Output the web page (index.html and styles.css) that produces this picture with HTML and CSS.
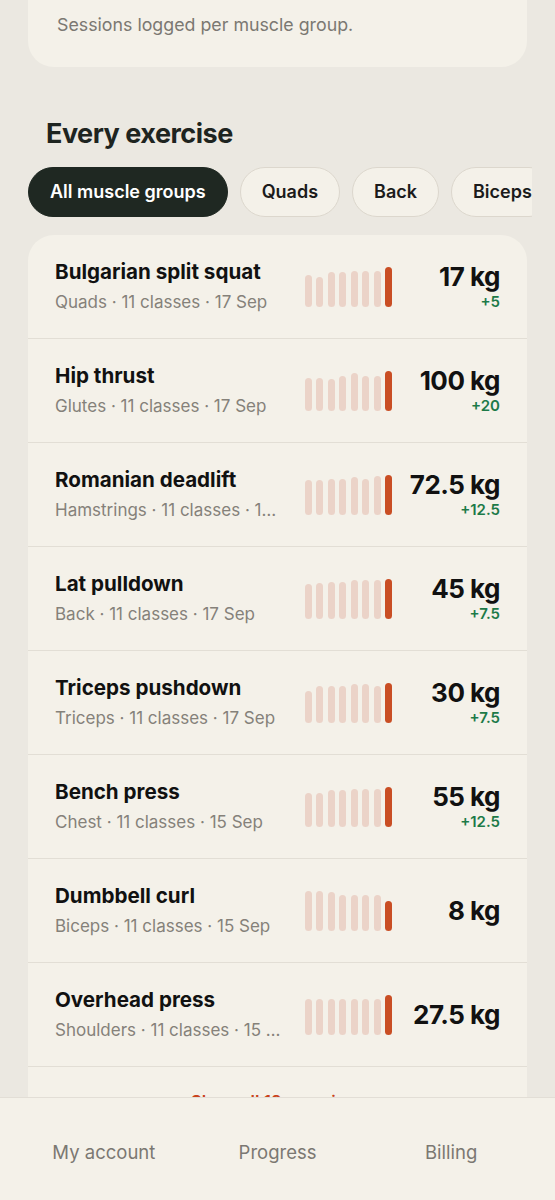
FILE: index.html
```html
<!DOCTYPE html>
<html>
<head>
    <meta charset="utf-8">
    <title>Progress</title>
    <link rel="stylesheet" href="styles.css">
</head>
<body>
<div class="page">
    <div class="summary">
        <p class="summary-note">Sessions logged per muscle group.</p>
    </div>

    <h2 class="section-title">Every exercise</h2>

    <div class="chips">
        <span class="chip on">All muscle groups</span>
        <span class="chip">Quads</span>
        <span class="chip">Back</span>
        <span class="chip">Biceps</span>
        <span class="chip">Chest</span>
    </div>

    <div class="list">
        <div class="row">
            <div class="info">
                <div class="name">Bulgarian split squat</div>
                <div class="meta">Quads · 11 classes · 17 Sep</div>
            </div>
            <div class="spark">
                <i style="height:80%"></i><i style="height:75%"></i><i style="height:87%"></i><i style="height:87%"></i><i style="height:90%"></i><i style="height:90%"></i><i style="height:90%"></i><i class="last" style="height:100%"></i>
            </div>
            <div class="value">
                <div class="kg">17 kg</div>
                <div class="delta">+5</div>
            </div>
        </div>
        <div class="row">
            <div class="info">
                <div class="name">Hip thrust</div>
                <div class="meta">Glutes · 11 classes · 17 Sep</div>
            </div>
            <div class="spark">
                <i style="height:82%"></i><i style="height:82%"></i><i style="height:80%"></i><i style="height:87%"></i><i style="height:95%"></i><i style="height:87%"></i><i style="height:87%"></i><i class="last" style="height:98%"></i>
            </div>
            <div class="value">
                <div class="kg">100 kg</div>
                <div class="delta">+20</div>
            </div>
        </div>
        <div class="row">
            <div class="info">
                <div class="name">Romanian deadlift</div>
                <div class="meta">Hamstrings · 11 classes · 17 Sep</div>
            </div>
            <div class="spark">
                <i style="height:87%"></i><i style="height:87%"></i><i style="height:90%"></i><i style="height:90%"></i><i style="height:95%"></i><i style="height:90%"></i><i style="height:97%"></i><i class="last" style="height:100%"></i>
            </div>
            <div class="value">
                <div class="kg">72.5 kg</div>
                <div class="delta">+12.5</div>
            </div>
        </div>
        <div class="row">
            <div class="info">
                <div class="name">Lat pulldown</div>
                <div class="meta">Back · 11 classes · 17 Sep</div>
            </div>
            <div class="spark">
                <i style="height:87%"></i><i style="height:90%"></i><i style="height:92%"></i><i style="height:92%"></i><i style="height:97%"></i><i style="height:97%"></i><i style="height:97%"></i><i class="last" style="height:100%"></i>
            </div>
            <div class="value">
                <div class="kg">45 kg</div>
                <div class="delta">+7.5</div>
            </div>
        </div>
        <div class="row">
            <div class="info">
                <div class="name">Triceps pushdown</div>
                <div class="meta">Triceps · 11 classes · 17 Sep</div>
            </div>
            <div class="spark">
                <i style="height:80%"></i><i style="height:92%"></i><i style="height:92%"></i><i style="height:92%"></i><i style="height:97%"></i><i style="height:97%"></i><i style="height:92%"></i><i class="last" style="height:100%"></i>
            </div>
            <div class="value">
                <div class="kg">30 kg</div>
                <div class="delta">+7.5</div>
            </div>
        </div>
        <div class="row">
            <div class="info">
                <div class="name">Bench press</div>
                <div class="meta">Chest · 11 classes · 15 Sep</div>
            </div>
            <div class="spark">
                <i style="height:85%"></i><i style="height:85%"></i><i style="height:92%"></i><i style="height:92%"></i><i style="height:95%"></i><i style="height:95%"></i><i style="height:95%"></i><i class="last" style="height:100%"></i>
            </div>
            <div class="value">
                <div class="kg">55 kg</div>
                <div class="delta">+12.5</div>
            </div>
        </div>
        <div class="row">
            <div class="info">
                <div class="name">Dumbbell curl</div>
                <div class="meta">Biceps · 11 classes · 15 Sep</div>
            </div>
            <div class="spark">
                <i style="height:100%"></i><i style="height:100%"></i><i style="height:97%"></i><i style="height:88%"></i><i style="height:88%"></i><i style="height:88%"></i><i style="height:88%"></i><i class="last" style="height:73%"></i>
            </div>
            <div class="value">
                <div class="kg">8 kg</div>
            </div>
        </div>
        <div class="row">
            <div class="info">
                <div class="name">Overhead press</div>
                <div class="meta">Shoulders · 11 classes · 15 Sep</div>
            </div>
            <div class="spark">
                <i style="height:90%"></i><i style="height:90%"></i><i style="height:90%"></i><i style="height:90%"></i><i style="height:90%"></i><i style="height:90%"></i><i style="height:90%"></i><i class="last" style="height:100%"></i>
            </div>
            <div class="value">
                <div class="kg">27.5 kg</div>
            </div>
        </div>
        <div class="show-all">Show all 12 exercises</div>
    </div>
</div>

<nav class="tabbar">
    <a href="javascript:;">My account</a>
    <a href="javascript:;">Progress</a>
    <a href="javascript:;">Billing</a>
</nav>
</body>
</html>
```

FILE: styles.css
```css
*{margin:0;padding:0;box-sizing:border-box;}
body{background:#ebe8e1;font-family:"Inter","Noto Sans",sans-serif;color:#141414;}
.page{padding:0 28px 120px 28px;}

.summary{background:#f4f1e9;border-radius:0 0 26px 26px;margin-top:-30px;padding:43px 29px 30px;}
.summary-note{font-size:17.8px;line-height:24px;color:#7b7872;}

.section-title{font-size:27px;line-height:32px;font-weight:700;letter-spacing:-0.5px;color:#1e2420;padding:51px 0 0 18px;}

.chips{display:flex;gap:12px;margin:17px -5px 0 0;overflow:hidden;}
.chip{flex:none;height:50px;line-height:48px;padding:0 21px;border:1px solid #dcd7cd;border-radius:25px;background:#f4f1e9;font-size:18px;font-weight:600;color:#1b1b1b;}
.chip.on{background:#1f2822;border-color:#1f2822;color:#fff;}

.list{margin-top:18px;background:#f4f1e9;border-radius:26px 26px 0 0;}
.row{display:grid;grid-template-columns:1fr 87px 108px;align-items:center;height:104px;padding:0 27px;border-bottom:1px solid #e2ded5;}
.info{min-width:0;padding-right:20px;}
.name{font-size:20.6px;line-height:26px;font-weight:700;color:#111;white-space:nowrap;}
.meta{margin-top:5px;font-size:17px;line-height:24px;color:#85817a;white-space:nowrap;overflow:hidden;text-overflow:ellipsis;}

.spark{display:flex;align-items:flex-end;justify-content:space-between;height:40px;}
.spark i{display:block;width:7px;border-radius:4px;background:#ebd3c8;}
.spark i.last{background:#c94e24;}

.value{text-align:right;}
.kg{font-size:26px;line-height:30px;font-weight:700;letter-spacing:-0.5px;color:#111;white-space:nowrap;}
.delta{font-size:15px;line-height:20px;font-weight:600;color:#1d7a48;}

.show-all{height:80px;padding-top:25px;text-align:center;font-size:17px;font-weight:600;color:#c9441c;}

.tabbar{position:fixed;left:0;right:0;bottom:0;height:103px;display:flex;padding:0 17px;background:#f4f1e9;border-top:1px solid #e2ded6;}
.tabbar a{flex:1;text-align:center;line-height:108px;font-size:18.5px;color:#7b7872;text-decoration:none;}
```
